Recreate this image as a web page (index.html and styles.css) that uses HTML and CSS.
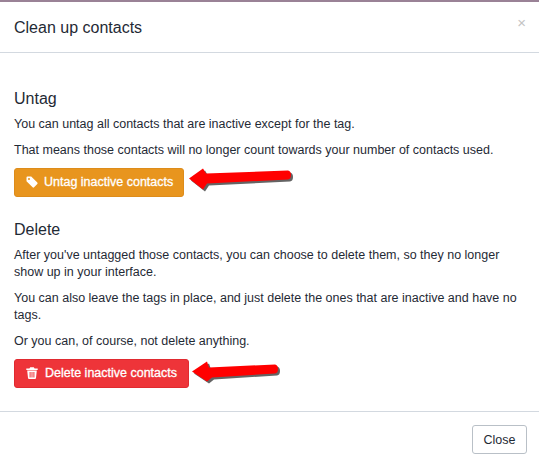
FILE: index.html
```html
<!DOCTYPE html>
<html lang="en">
<head>
<meta charset="utf-8">
<title>Clean up contacts</title>
<link rel="stylesheet" href="styles.css">
</head>
<body>
<div class="modal">
  <header class="modal-header">
    <h4 class="modal-title">Clean up contacts</h4>
    <span class="close">×</span>
  </header>
  <main class="modal-body">
    <h5 class="section-title">Untag</h5>
    <p>You can untag all contacts that are inactive except for the tag.</p>
    <p>That means those contacts will no longer count towards your number of contacts used.</p>
    <div class="action">
      <button class="btn btn-orange">
        <svg class="icon" viewBox="0 0 12 12" width="12" height="12"><path fill="#fff" fill-rule="evenodd" d="M0.5 1.5Q0.5 0.5 1.5 0.5H5.2L11.3 6.6Q12 7.4 11.3 8.1L8.1 11.3Q7.4 12 6.6 11.3L0.5 5.2ZM3 2A1 1 0 1 0 3 4A1 1 0 1 0 3 2Z"/></svg>
        <span>Untag inactive contacts</span>
      </button>
      <svg class="arrow" viewBox="0 0 112 28" width="112" height="28"><path class="arrow-shadow" transform="translate(2 2)" d="M5 10.5L19 .5L22 5.5L104 2.5Q107 3 107 7Q107 11 104 11.5L23 15.5L19 21.5Z"/><path fill="#f00" d="M5 10.5L19 .5L22 5.5L104 2.5Q107 3 107 7Q107 11 104 11.5L23 15.5L19 21.5Z"/></svg>
    </div>
    <h5 class="section-title section-delete">Delete</h5>
    <p>After you've untagged those contacts, you can choose to delete them, so they no longer show up in your interface.</p>
    <p>You can also leave the tags in place, and just delete the ones that are inactive and have no tags.</p>
    <p>Or you can, of course, not delete anything.</p>
    <div class="action">
      <button class="btn btn-red">
        <svg class="icon" viewBox="0 0 12 12" width="12" height="12"><path fill="#fff" fill-rule="evenodd" d="M0.3 1.6H3.4L4.2 0.2H7.8L8.6 1.6H11.7V3H0.3ZM1.2 3.6H10.8L10 11Q9.9 12 9 12H3Q2.1 12 2 11ZM3.6 5V10.6H4.6V5ZM5.5 5V10.6H6.5V5ZM7.4 5V10.6H8.4V5Z"/></svg>
        <span>Delete inactive contacts</span>
      </button>
      <svg class="arrow" viewBox="0 0 94 28" width="94" height="28"><path class="arrow-shadow" transform="translate(2 2)" d="M3 12.5L18 2.5L20 8.5L86 5.5Q89 6 89 10Q89 14 86 14.5L23 18.5L18 22.5Z"/><path fill="#f00" d="M3 12.5L18 2.5L20 8.5L86 5.5Q89 6 89 10Q89 14 86 14.5L23 18.5L18 22.5Z"/></svg>
    </div>
  </main>
  <footer class="modal-footer">
    <button class="btn btn-default">Close</button>
  </footer>
</div>
</body>
</html>
```
FILE: styles.css
```css
* { box-sizing: border-box; }
html, body { margin: 0; padding: 0; }
body {
  width: 539px;
  height: 468px;
  overflow: hidden;
  background: #fff;
  color: #1f2a35;
  font-family: "Liberation Sans", Arial, sans-serif;
  font-size: 12.5px;
  line-height: 17px;
}
.modal { border-top: 2px solid #9a8296; }
.modal-header {
  height: 51px;
  padding: 0 14px;
  display: flex;
  align-items: center;
  justify-content: space-between;
  border-bottom: 1px solid #d3d9e0;
}
.modal-title { margin: 0; font-size: 16px; font-weight: 400; }
.close { color: #c4c4c4; font-size: 15px; margin-right: -1px; margin-top: -9px; }
.modal-body { height: 358px; padding: 36px 18px 0 14px; }
.section-title { margin: 0 0 7px; font-size: 16px; font-weight: 400; line-height: 20px; }
.section-delete { margin-top: 23px; }
p { margin: 0 0 9px; }
.action { display: flex; align-items: center; margin-top: -1px; height: 30px; }
.btn {
  font-family: inherit;
  font-size: 12.5px;
  border-radius: 3px;
  height: 29px;
  cursor: pointer;
}
.btn-orange, .btn-red {
  display: inline-flex;
  align-items: center;
  gap: 6px;
  color: #fff;
  font-weight: 400;
  -webkit-text-stroke: 0.3px #fff;
  padding: 0 11px;
  white-space: nowrap;
}
.btn-orange { width: 170px; background: #e8951e; border: 1px solid #dd8c1b; }
.btn-red { width: 175px; gap: 7px; background: #ee3439; border: 1px solid #e02a30; }
.btn-default { width: 55px; background: #fff; border: 1px solid #b9c0c7; color: #1f2a35; padding: 0; }
.icon { flex: none; }
.arrow { flex: none; }
.arrow-shadow { fill: #222; opacity: .7; }
.modal-footer { border-top: 1px solid #d3d9e0; padding: 13px 12px 0; display: flex; justify-content: flex-end; }
```
